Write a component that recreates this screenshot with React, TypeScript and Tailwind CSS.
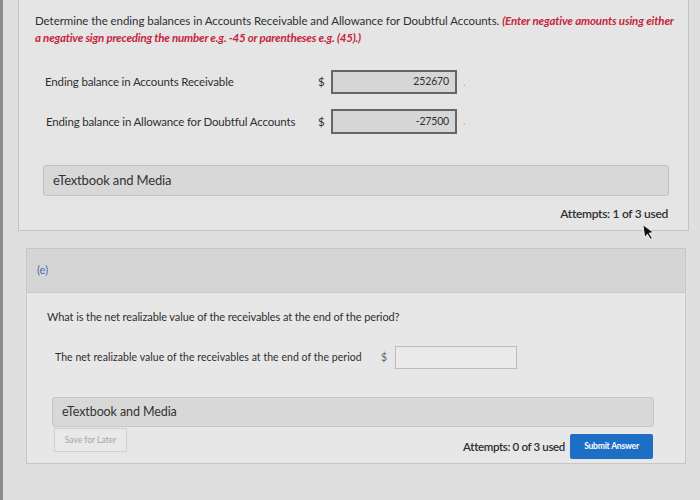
import React from "react";

function Cursor() {
  return (
    <svg width="12" height="18" viewBox="0 0 12 18" className="absolute left-[643px] top-[223px]">
      <path d="M1 1 L1 14 L4 11 L6.5 16.5 L8.5 15.6 L6 10.2 L10.5 10.2 Z" fill="#111" stroke="#fff" strokeWidth="0.8" transform="rotate(-8 6 9)" />
    </svg>
  );
}

export default function App() {
  return (
    <div className="relative w-[700px] h-[500px] overflow-hidden bg-[#dfdfdf] flex font-['Lato','Liberation_Sans',sans-serif] text-[#3a3a3a]">
      <div className="w-[3px] bg-[#8b8b8b]" />
      <div className="flex-1 flex flex-col">
        {/* Card 1 */}
        <div className="ml-[15px] w-[671px] h-[231px] border-l border-r border-b border-[#c3c3c3] bg-[#e5e5e5] flex flex-col">
          <div className="pt-[12px] pl-[16px] pr-[4px] text-[11.5px] leading-[17px] text-[#2f2f2f] whitespace-nowrap">
            <span className="tracking-[-0.05px]">Determine the ending balances in Accounts Receivable and Allowance for Doubtful Accounts. </span>
            <span className="italic font-bold text-[#c5253d] tracking-[-0.15px]">(Enter negative amounts using either</span>
            <br />
            <span className="italic font-bold text-[#c5253d] tracking-[-0.2px]">
              a negative sign preceding the number e.g. -45 or parentheses e.g. (45).)
            </span>
          </div>

          <div className="mt-[24px] flex items-center pl-[26px] text-[11.5px] tracking-[-0.15px] text-[#2f2f2f]">
            <div className="w-[273px]">Ending balance in Accounts Receivable</div>
            <div className="w-[6px]">$</div>
            <div className="ml-[7px] w-[126px] h-[24px] border-2 border-[#666] bg-[#d6d6d6] flex items-center justify-end pr-[6px] text-[10.5px]">
              252670
            </div>
            <div className="ml-[6px] text-[#999] text-[10px]">.</div>
          </div>

          <div className="mt-[15px] flex items-center pl-[27px] text-[11.5px] tracking-[-0.17px] text-[#2f2f2f]">
            <div className="w-[272px]">Ending balance in Allowance for Doubtful Accounts</div>
            <div className="w-[6px]">$</div>
            <div className="ml-[7px] w-[126px] h-[25px] border-2 border-[#666] bg-[#d6d6d6] flex items-center justify-end pr-[6px] text-[10.5px]">
              -27500
            </div>
            <div className="ml-[6px] text-[#999] text-[10px]">.</div>
          </div>

          <div className="mt-[31px] ml-[24px] w-[626px] h-[31px] rounded-[3px] border border-[#c2c2c2] bg-[#d8d8d8] flex items-center pl-[9px] text-[13px] tracking-[-0.15px] text-[#333]">
            eTextbook and Media
          </div>

          <div className="mt-[11px] pr-[20px] flex justify-end text-[12px] font-semibold tracking-[-0.3px] text-[#2f2f2f] leading-[14px]">
            Attempts: 1 of 3 used
          </div>
        </div>

        {/* Card 2 */}
        <div className="mt-[17px] ml-[23px] w-[660px] h-[216px] border border-[#c6c6c6] bg-[#e7e7e7] flex flex-col">
          <div className="h-[44px] bg-[#d5d5d5] border-b border-[#c8c8c8] flex items-center pl-[10px] text-[11px] text-[#4a6ea8]">
            (e)
          </div>
          <div className="pt-[17px] pl-[20px] text-[11px] leading-[14px] tracking-[-0.1px] text-[#2f2f2f]">
            What is the net realizable value of the receivables at the end of the period?
          </div>
          <div className="mt-[22px] flex items-center pl-[28px] text-[10.5px] tracking-[0.05px] text-[#2f2f2f]">
            <div className="w-[326px]">The net realizable value of the receivables at the end of the period</div>
            <div className="w-[6px] text-[#666]">$</div>
            <div className="ml-[8px] w-[122px] h-[23px] border border-[#bdbdbd] bg-[#eaeaea]" />
          </div>
          <div className="mt-[28px] ml-[25px] w-[602px] h-[30px] rounded-[3px] border border-[#c6c6c6] bg-[#d8d8d8] flex items-center pl-[9px] text-[12.5px] tracking-[-0.1px] text-[#333]">
            eTextbook and Media
          </div>
          <div className="flex items-start">
            <div className="mt-[1px] ml-[27px] w-[73px] h-[24px] border border-[#cfcfcf] bg-[#e9e9e9] flex items-center justify-center text-[8.5px] text-[#a5a5a5]">
              Save for Later
            </div>
            <div className="ml-auto mr-[32px] mt-[7px] flex items-center">
              <div className="text-[11.5px] font-semibold tracking-[-0.35px] text-[#2f2f2f]">Attempts: 0 of 3 used</div>
              <div className="ml-[5px] w-[83px] h-[25px] rounded-[2px] bg-[#1d6fc6] flex items-center justify-center text-[8.5px] font-bold text-white tracking-[-0.2px]">
                Submit Answer
              </div>
            </div>
          </div>
        </div>
      </div>
      <Cursor />
    </div>
  );
}
